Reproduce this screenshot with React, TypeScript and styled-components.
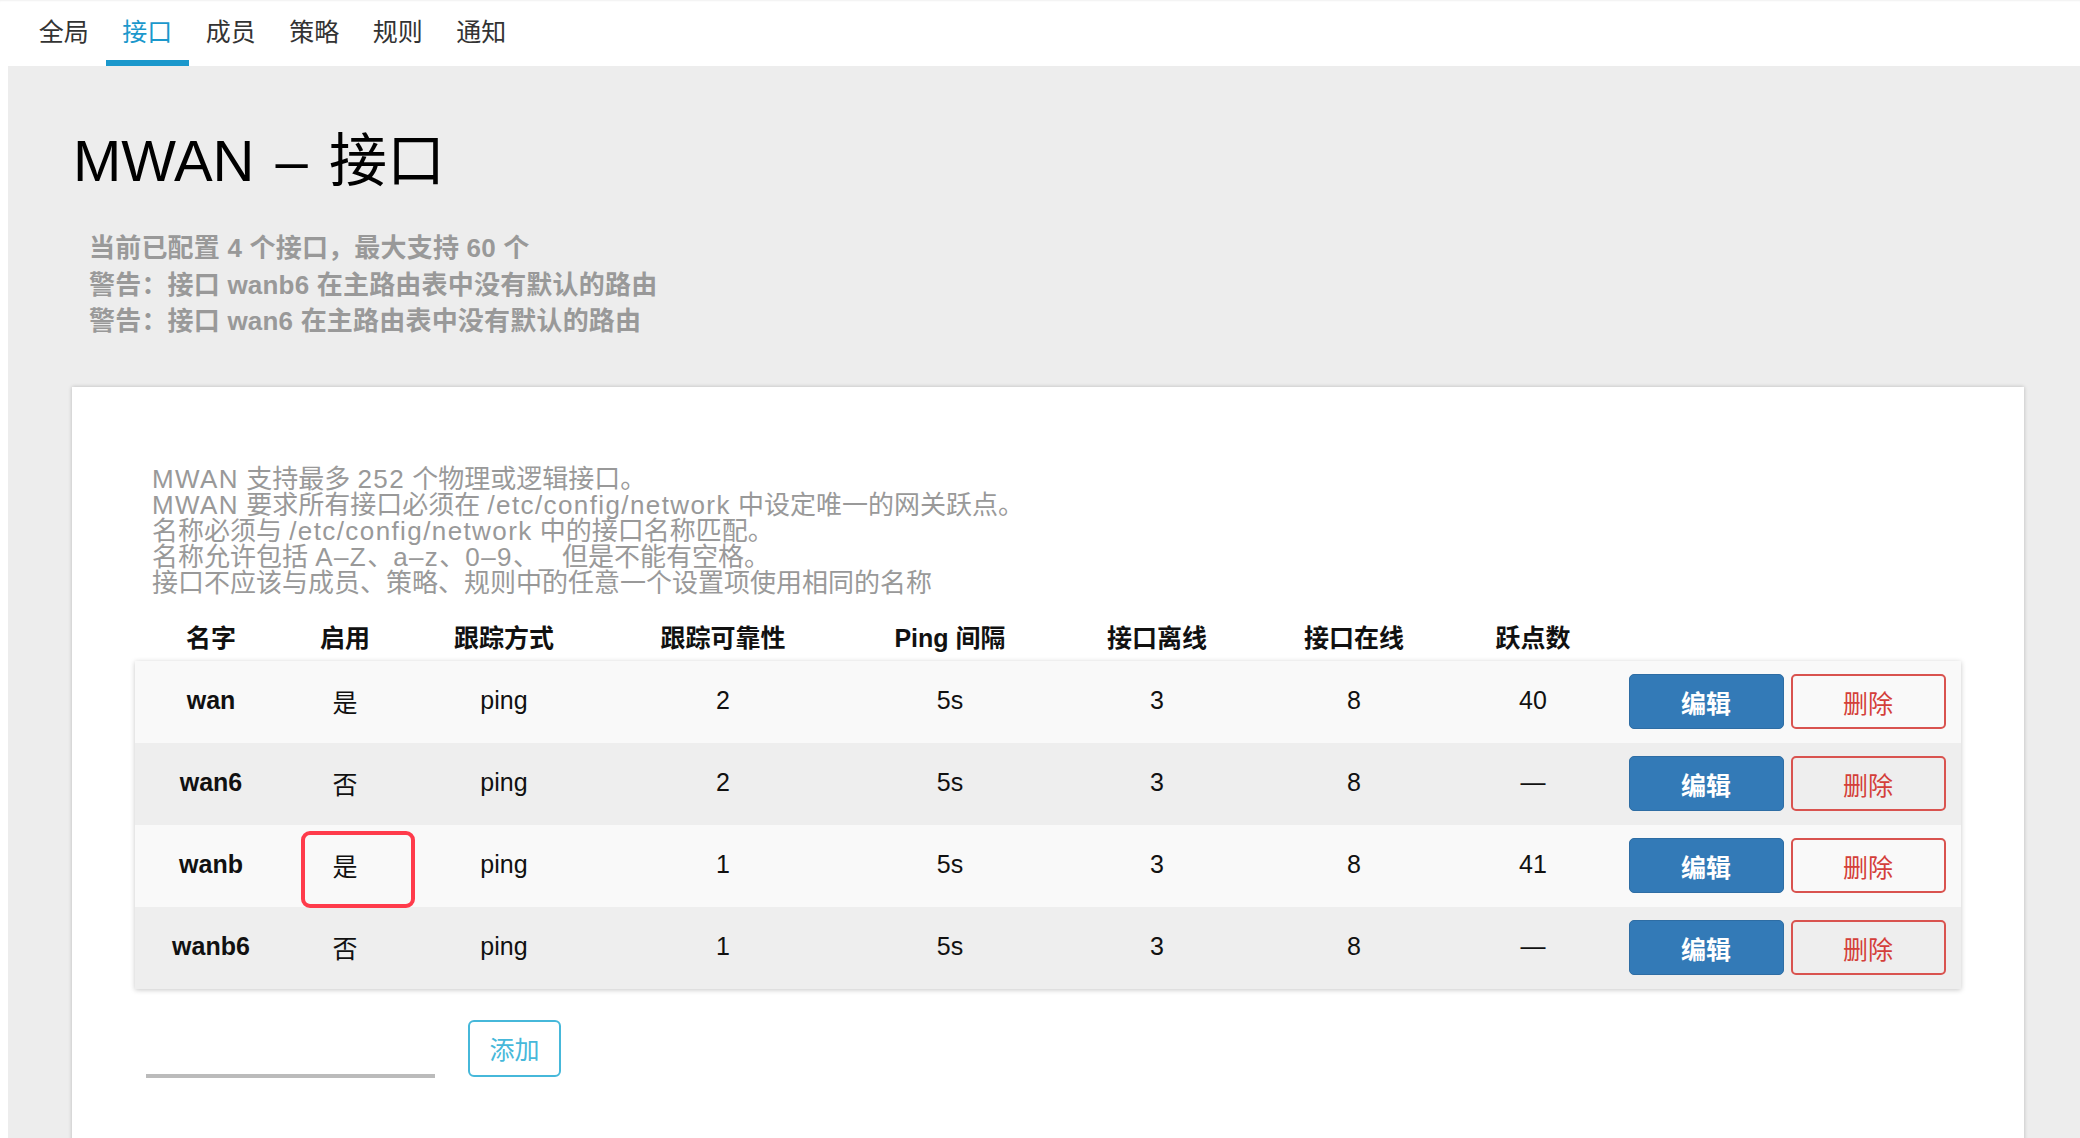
import React from "react";
import styled, { createGlobalStyle } from "styled-components";

const FONT = `"Liberation Sans", "Noto Sans CJK SC", sans-serif`;

const Global = createGlobalStyle`
  html, body { margin: 0; padding: 0; background: #ffffff; }
  body { font-family: ${FONT}; }
  * { box-sizing: border-box; }
`;

const Page = styled.div`
  width: 2080px;
  min-height: 1138px;
  overflow: hidden;
  background: #ffffff;
`;

const Nav = styled.nav`
  height: 66px;
  display: flex;
  align-items: stretch;
  padding-left: 22px;
  background: #ffffff;
  box-shadow: inset 0 2px 2px -1px rgba(0, 0, 0, 0.06);
`;

const NavItem = styled.a<{ $active?: boolean }>`
  display: flex;
  align-items: center;
  justify-content: center;
  width: 83.5px;
  font-size: 25px;
  color: ${(p) => (p.$active ? "#1b98cc" : "#333333")};
  border-bottom: 6px solid ${(p) => (p.$active ? "#1b98cc" : "transparent")};
  text-decoration: none;
  cursor: pointer;
`;

const Main = styled.main`
  margin-left: 8px;
  background: #ededed;
  min-height: 1072px;
  padding: 62px 56px 0 64px;
`;

const Title = styled.h1`
  margin: 0;
  font-size: 58px;
  line-height: 66px;
  font-weight: 400;
  word-spacing: 5px;
  color: #000000;
  padding-left: 1px;
`;

const Notes = styled.div`
  margin-top: 36px;
  padding-left: 17px;
  font-size: 26px;
  line-height: 36.5px;
  font-weight: 700;
  letter-spacing: 0.2px;
  color: #999999;
`;

const Card = styled.section`
  margin-top: 47px;
  background: #ffffff;
  box-shadow: 0 0 4px rgba(0, 0, 0, 0.22);
  padding: 79px 63px 200px;
`;

const Help = styled.div`
  padding-left: 17px;
  font-size: 26px;
  line-height: 26px;
  color: #999999;
`;

const Lat = styled.span`
  letter-spacing: 1.4px;
`;

const COLS = "152px 116px 202px 236px 218px 196px 198px 160px 1fr";

const HeadRow = styled.div`
  margin-top: 17px;
  height: 48px;
  display: grid;
  grid-template-columns: ${COLS};
  align-items: center;
  font-size: 25px;
  font-weight: 700;
  color: #111111;
`;

const Body = styled.div`
  box-shadow: 0 1px 5px rgba(0, 0, 0, 0.22);
`;

const Row = styled.div<{ $alt?: boolean }>`
  height: 82px;
  display: grid;
  grid-template-columns: ${COLS};
  align-items: center;
  font-size: 25px;
  font-weight: 400;
  color: #111111;
  background: ${(p) => (p.$alt ? "#eeeeee" : "#f9f9f9")};
`;

const Cell = styled.div<{ $bold?: boolean }>`
  position: relative;
  text-align: center;
  padding-bottom: 2px;
  font-weight: ${(p) => (p.$bold ? 700 : "inherit")};
`;

const Actions = styled.div`
  display: flex;
  justify-content: center;
  gap: 7px;
`;

const Btn = styled.button<{ $variant: "edit" | "del" }>`
  width: 155px;
  height: 55px;
  border-radius: 5px;
  font-family: ${FONT};
  font-size: 25px;
  cursor: pointer;
  ${(p) =>
    p.$variant === "edit"
      ? `background: #337ab7; border: 1px solid #2e6da4; color: #ffffff; font-weight: 700;`
      : `background: transparent; border: 2px solid #d9534f; color: #d43f3a; font-weight: 400;`}
`;

const Highlight = styled.span`
  position: absolute;
  left: 14px;
  top: -16px;
  width: 114px;
  height: 77px;
  border: 4px solid #ff3b4b;
  border-radius: 9px;
  pointer-events: none;
`;

const AddRow = styled.div`
  margin-top: 31px;
  padding-left: 11px;
  display: flex;
  align-items: flex-end;
  gap: 33px;
`;

const NameInput = styled.input`
  width: 289px;
  height: 40px;
  border: none;
  border-bottom: 4px solid #bbbbbb;
  background: transparent;
  outline: none;
  font-family: ${FONT};
  font-size: 24px;
  margin-bottom: -1px;
`;

const AddBtn = styled.button`
  width: 93px;
  height: 57px;
  border: 2px solid #46b8da;
  border-radius: 6px;
  background: #ffffff;
  color: #46b8da;
  font-family: ${FONT};
  font-size: 25px;
  cursor: pointer;
`;

type Iface = {
  name: string;
  enabled: string;
  track: string;
  reliability: string;
  interval: string;
  down: string;
  up: string;
  metric: string;
  mark?: boolean;
};

const rows: Iface[] = [
  { name: "wan", enabled: "是", track: "ping", reliability: "2", interval: "5s", down: "3", up: "8", metric: "40" },
  { name: "wan6", enabled: "否", track: "ping", reliability: "2", interval: "5s", down: "3", up: "8", metric: "—" },
  { name: "wanb", enabled: "是", track: "ping", reliability: "1", interval: "5s", down: "3", up: "8", metric: "41", mark: true },
  { name: "wanb6", enabled: "否", track: "ping", reliability: "1", interval: "5s", down: "3", up: "8", metric: "—" },
];

const tabs = ["全局", "接口", "成员", "策略", "规则", "通知"];

export default function App() {
  return (
    <Page>
      <Global />
      <Nav>
        {tabs.map((t) => (
          <NavItem key={t} $active={t === "接口"}>
            {t}
          </NavItem>
        ))}
      </Nav>
      <Main>
        <Title>MWAN – 接口</Title>
        <Notes>
          <div>当前已配置 4 个接口，最大支持 60 个</div>
          <div>警告：接口 wanb6 在主路由表中没有默认的路由</div>
          <div>警告：接口 wan6 在主路由表中没有默认的路由</div>
        </Notes>
        <Card>
          <Help>
            <div>
              <Lat>MWAN</Lat> 支持最多 <Lat>252</Lat> 个物理或逻辑接口。
            </div>
            <div>
              <Lat>MWAN</Lat> 要求所有接口必须在 <Lat>/etc/config/network</Lat> 中设定唯一的网关跃点。
            </div>
            <div>
              名称必须与 <Lat>/etc/config/network</Lat> 中的接口名称匹配。
            </div>
            <div>
              名称允许包括 <Lat>A–Z</Lat>、<Lat>a–z</Lat>、<Lat>0–9</Lat>、<Lat>_</Lat> 但是不能有空格。
            </div>
            <div>接口不应该与成员、策略、规则中的任意一个设置项使用相同的名称</div>
          </Help>
          <HeadRow>
            <Cell>名字</Cell>
            <Cell>启用</Cell>
            <Cell>跟踪方式</Cell>
            <Cell>跟踪可靠性</Cell>
            <Cell>Ping 间隔</Cell>
            <Cell>接口离线</Cell>
            <Cell>接口在线</Cell>
            <Cell>跃点数</Cell>
            <Cell />
          </HeadRow>
          <Body>
            {rows.map((r, i) => (
              <Row key={r.name} $alt={i % 2 === 1}>
                <Cell $bold>{r.name}</Cell>
                <Cell>
                  {r.enabled}
                  {r.mark && <Highlight />}
                </Cell>
                <Cell>{r.track}</Cell>
                <Cell>{r.reliability}</Cell>
                <Cell>{r.interval}</Cell>
                <Cell>{r.down}</Cell>
                <Cell>{r.up}</Cell>
                <Cell>{r.metric}</Cell>
                <Actions>
                  <Btn $variant="edit">编辑</Btn>
                  <Btn $variant="del">删除</Btn>
                </Actions>
              </Row>
            ))}
          </Body>
          <AddRow>
            <NameInput type="text" />
            <AddBtn>添加</AddBtn>
          </AddRow>
        </Card>
      </Main>
    </Page>
  );
}
